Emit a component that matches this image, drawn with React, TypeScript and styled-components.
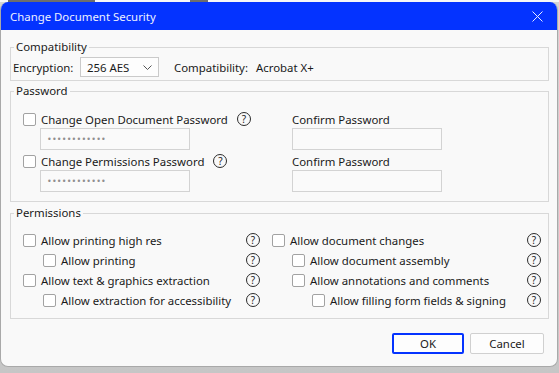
import styled, { createGlobalStyle } from "styled-components";

const GlobalStyle = createGlobalStyle`
  html, body {
    margin: 0;
    padding: 0;
  }
  body {
    width: 559px;
    height: 373px;
    overflow: hidden;
    background: #cdcdcd;
    font-family: "Noto Sans", "Segoe UI", sans-serif;
    font-size: 11.4px;
    color: #1a1a1a;
  }
`;

const Desktop = styled.div`
  width: 559px;
  height: 373px;
  display: flex;
  flex-direction: column;
  background: linear-gradient(to bottom, #d4d4d4, #c6c6c6);
`;

const BehindStrip = styled.div`
  height: 2px;
  flex: none;
  background: linear-gradient(
    to right,
    #f7f7f7 0 8px,
    #6d6d6d 8px 95px,
    #f7f7f7 95px 190px,
    #6d6d6d 190px 208px,
    #f7f7f7 208px
  );
`;

const Window = styled.div`
  width: 558px;
  height: 365px;
  box-sizing: border-box;
  border: 1px solid #a9a9a9;
  border-top: 0;
  border-radius: 8px;
  overflow: hidden;
  background: #f9f9f9;
  display: flex;
  flex-direction: column;
`;

const TitleBar = styled.div`
  height: 28px;
  flex: none;
  background: #0433ff;
  color: #eef1ff;
  display: flex;
  align-items: center;
  justify-content: space-between;
  padding: 0 14px 0 9px;
  font-size: 11.4px;
`;

const CloseButton = styled.button`
  border: 0;
  background: none;
  padding: 0;
  width: 12px;
  height: 12px;
  display: flex;
  align-items: center;
  justify-content: center;
`;

const Body = styled.div`
  padding: 17px 8px 0 9px;
  display: flex;
  flex-direction: column;
`;

const GroupBox = styled.div<{ $top: number; $pad: string }>`
  position: relative;
  margin-top: ${(p) => p.$top}px;
  border: 1px solid #d8d8d8;
  padding: ${(p) => p.$pad};
`;

const Caption = styled.span`
  position: absolute;
  top: -9px;
  left: 3px;
  padding: 0 2px;
  line-height: 16px;
  background: #f9f9f9;
`;

const CompatRow = styled.div`
  display: flex;
  align-items: center;
  height: 20px;
`;

const FixedLabel = styled.span<{ $w: number }>`
  width: ${(p) => p.$w}px;
  flex: none;
`;

const Select = styled.div`
  width: 79px;
  height: 20px;
  box-sizing: border-box;
  border: 1px solid #cacaca;
  background: #fdfdfd;
  display: flex;
  align-items: center;
  justify-content: space-between;
  padding: 0 6px 0 6px;
  margin-right: 15px;
`;

const PasswordBlock = styled.div`
  display: grid;
  grid-template-columns: 269px 150px;
  grid-template-rows: 18px 22px;
  & + & {
    margin-top: 2px;
  }
`;

const CheckRow = styled.div<{ $indent?: number }>`
  display: flex;
  align-items: center;
  height: 100%;
  padding-left: ${(p) => (p.$indent ?? 0) * 20}px;
`;

const Box = styled.span`
  width: 13px;
  height: 13px;
  box-sizing: border-box;
  border: 1px solid #a2a2a2;
  border-radius: 2px;
  background: #ffffff;
  margin-right: 5px;
  flex: none;
`;

const Help = styled.span<{ $push?: boolean }>`
  width: 14px;
  height: 14px;
  box-sizing: border-box;
  border: 1px solid #2b2b2b;
  border-radius: 50%;
  display: flex;
  align-items: center;
  justify-content: center;
  font-size: 10px;
  font-weight: 400;
  line-height: 1;
  color: #222;
  flex: none;
  margin-left: ${(p) => (p.$push ? "auto" : "9px")};
`;

const FieldLabel = styled.span`
  display: flex;
  align-items: center;
`;

const TextInput = styled.input<{ $offset?: number }>`
  width: 150px;
  height: 22px;
  box-sizing: border-box;
  margin: 0 0 0 ${(p) => p.$offset ?? 0}px;
  border: 1px solid #d3d3d3;
  background: #fafafa;
  padding: 0 0 0 6px;
  font-family: "DejaVu Sans", sans-serif;
  font-size: 8px;
  letter-spacing: 0.2px;
  color: #8f8f8f;
  outline: none;
`;

const PermGrid = styled.div`
  display: grid;
  grid-template-columns: 237px 1fr;
  column-gap: 12px;
`;

const PermColumn = styled.div`
  display: flex;
  flex-direction: column;
`;

const PermRow = styled.div`
  height: 20px;
`;

const Footer = styled.div`
  display: flex;
  justify-content: flex-end;
  gap: 6px;
  margin-top: 14px;
  padding-right: 5px;
`;

const Button = styled.button<{ $primary?: boolean; $w: number }>`
  width: ${(p) => p.$w}px;
  height: 21px;
  box-sizing: border-box;
  background: #fdfdfd;
  border: ${(p) => (p.$primary ? "2px solid #0433ff" : "1px solid #d0d0d0")};
  border-radius: 2px;
  font-family: inherit;
  font-size: 11.4px;
  color: #1a1a1a;
  padding: 0;
`;

type Perm = { label: string; indent: number };

const leftPerms: Perm[] = [
  { label: "Allow printing high res", indent: 0 },
  { label: "Allow printing", indent: 1 },
  { label: "Allow text & graphics extraction", indent: 0 },
  { label: "Allow extraction for accessibility", indent: 1 },
];

const rightPerms: Perm[] = [
  { label: "Allow document changes", indent: 0 },
  { label: "Allow document assembly", indent: 1 },
  { label: "Allow annotations and comments", indent: 1 },
  { label: "Allow filling form fields & signing", indent: 2 },
];

function PermList({ items }: { items: Perm[] }) {
  return (
    <PermColumn>
      {items.map((p) => (
        <PermRow key={p.label}>
          <CheckRow $indent={p.indent}>
            <Box />
            <span>{p.label}</span>
            <Help $push>?</Help>
          </CheckRow>
        </PermRow>
      ))}
    </PermColumn>
  );
}

function PasswordField({ label }: { label: string }) {
  return (
    <PasswordBlock>
      <CheckRow>
        <Box />
        <span>{label}</span>
        <Help>?</Help>
      </CheckRow>
      <FieldLabel>Confirm Password</FieldLabel>
      <TextInput $offset={17} type="text" readOnly value="••••••••••••" />
      <TextInput type="text" readOnly value="" />
    </PasswordBlock>
  );
}

export default function App() {
  return (
    <Desktop>
      <GlobalStyle />
      <BehindStrip />
      <Window>
        <TitleBar>
          <span>Change Document Security</span>
          <CloseButton aria-label="Close">
            <svg width="11" height="11" viewBox="0 0 11 11">
              <path d="M0.5 0.5 L10.5 10.5 M10.5 0.5 L0.5 10.5" stroke="#e6eaff" strokeWidth="1" />
            </svg>
          </CloseButton>
        </TitleBar>
        <Body>
          <GroupBox $top={0} $pad="9px 0 3px 2px">
            <Caption>Compatibility</Caption>
            <CompatRow>
              <FixedLabel $w={67}>Encryption:</FixedLabel>
              <Select>
                <span>256 AES</span>
                <svg width="9" height="5" viewBox="0 0 9 5">
                  <path d="M0.5 0.5 L4.5 4.5 L8.5 0.5" fill="none" stroke="#555" strokeWidth="1" />
                </svg>
              </Select>
              <FixedLabel $w={82}>Compatibility:</FixedLabel>
              <span>Acrobat X+</span>
            </CompatRow>
          </GroupBox>

          <GroupBox $top={10} $pad="18px 0 9px 12px">
            <Caption>Password</Caption>
            <PasswordField label="Change Open Document Password" />
            <PasswordField label="Change Permissions Password" />
          </GroupBox>

          <GroupBox $top={11} $pad="16px 7px 8px 12px">
            <Caption>Permissions</Caption>
            <PermGrid>
              <PermList items={leftPerms} />
              <PermList items={rightPerms} />
            </PermGrid>
          </GroupBox>

          <Footer>
            <Button $primary $w={72}>OK</Button>
            <Button $w={74}>Cancel</Button>
          </Footer>
        </Body>
      </Window>
    </Desktop>
  );
}
